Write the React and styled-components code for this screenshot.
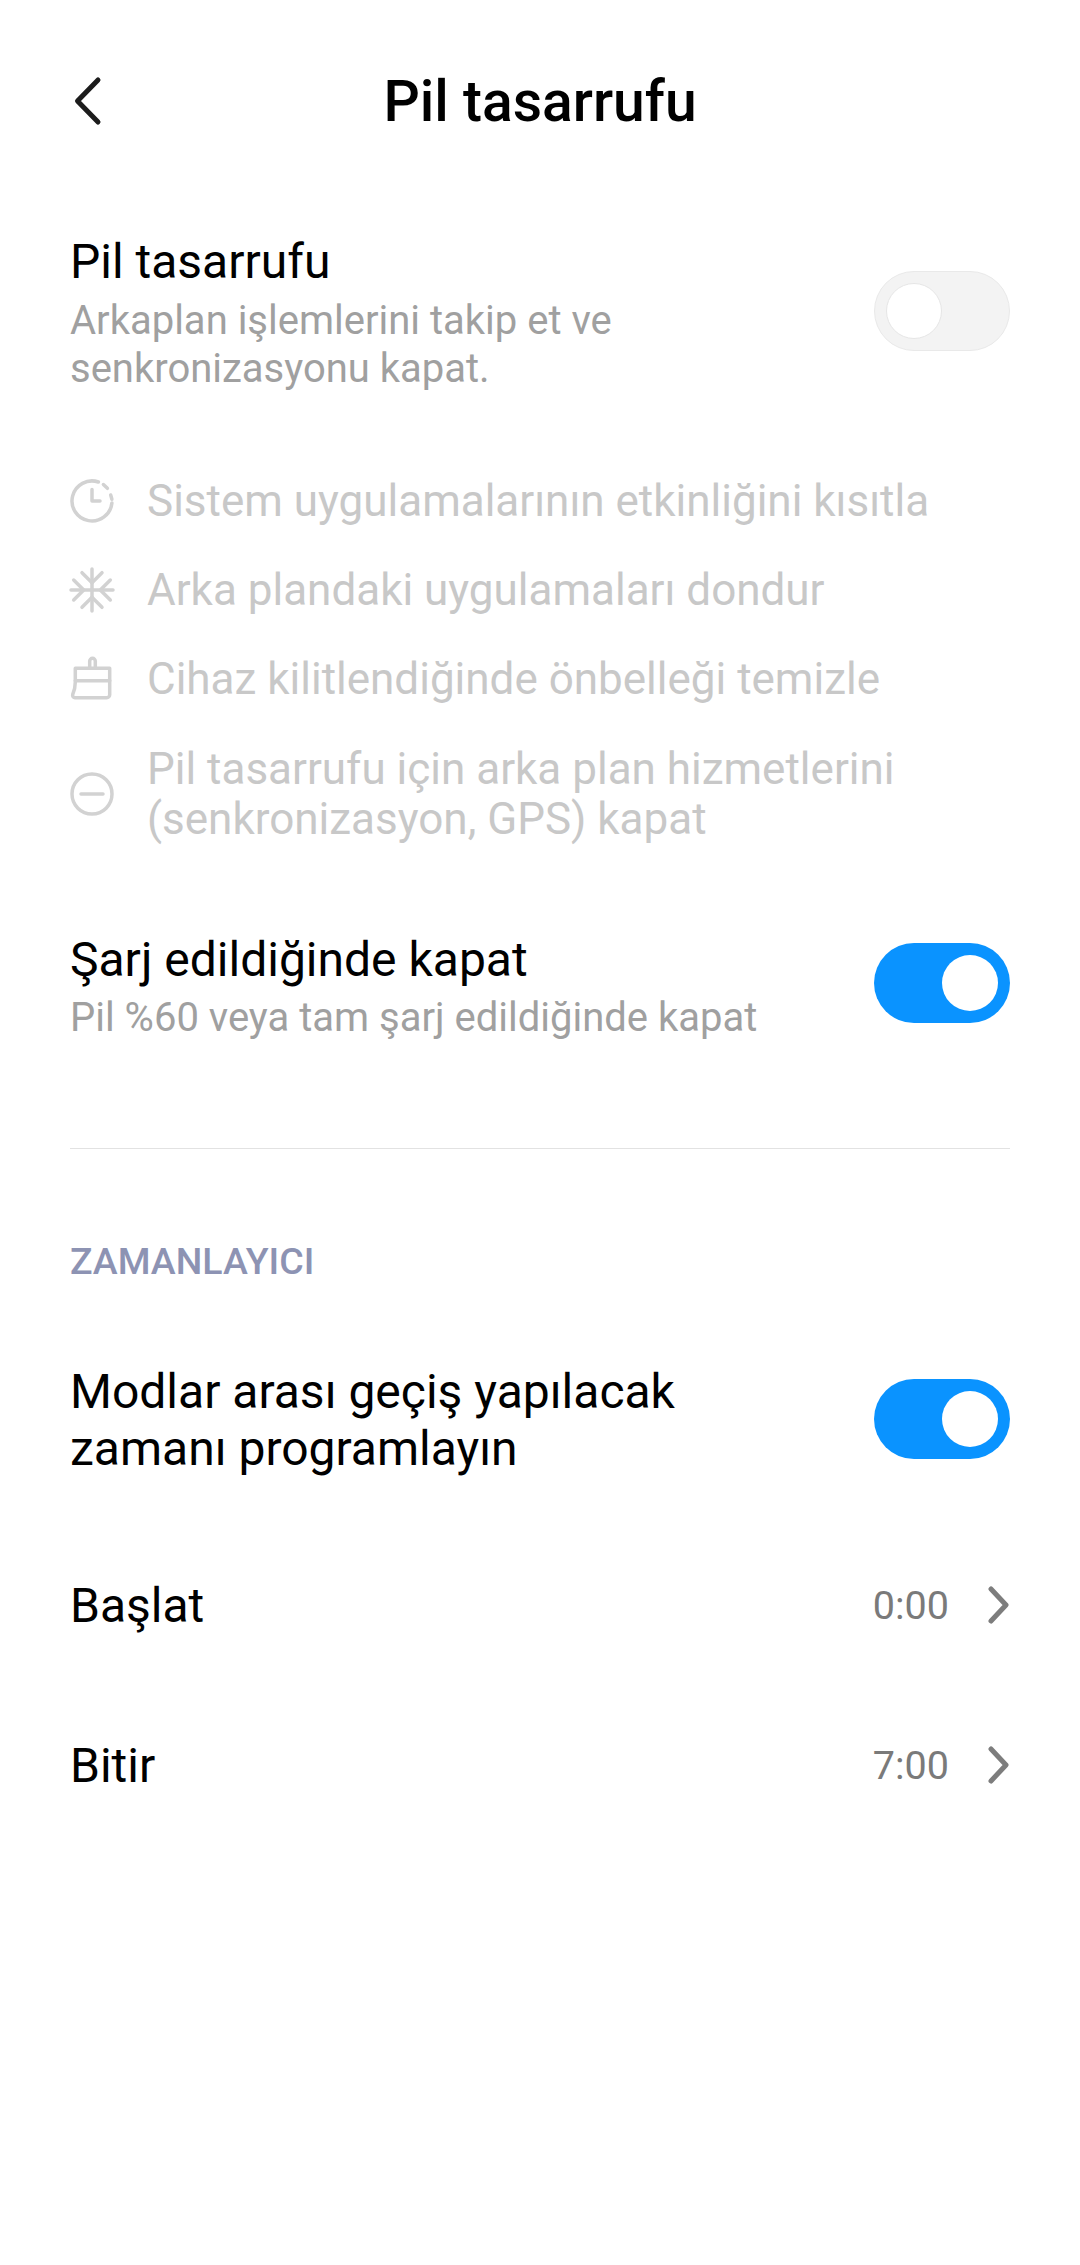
import React from 'react';
import styled, { createGlobalStyle } from 'styled-components';

const Global = createGlobalStyle`
  html, body { margin: 0; padding: 0; background: #fff; }
  body { font-family: Roboto, "Noto Sans", sans-serif; }
`;

const Page = styled.div`
  width: 1080px;
  height: 2265px;
  box-sizing: border-box;
  padding: 0 70px;
  background: #fff;
  overflow: hidden;
`;

const Header = styled.header`
  position: relative;
  height: 204px;
  display: flex;
  align-items: center;
  justify-content: center;
`;

const BackButton = styled.svg`
  position: absolute;
  left: 3px;
  top: 76px;
  width: 32px;
  height: 50px;
`;

const Title = styled.h1`
  margin: 0;
  font-size: 57px;
  font-weight: 500;
  color: #000;
  line-height: 64px;
`;

const SwitchRow = styled.section`
  display: flex;
  align-items: center;
  justify-content: space-between;
  margin-top: ${(p) => p.$top}px;
`;

const RowText = styled.div`
  width: ${(p) => p.$width}px;
`;

const RowTitle = styled.div`
  font-size: 48px;
  line-height: 57px;
  color: #000;
`;

const RowDesc = styled.div`
  font-size: 40px;
  line-height: 48px;
  color: #a0a0a0;
  margin-top: ${(p) => p.$top || 0}px;
`;

const Track = styled.div`
  flex: none;
  position: relative;
  box-sizing: border-box;
  width: 136px;
  height: 80px;
  border-radius: 40px;
  background: ${(p) => (p.$on ? '#0a93ff' : '#f3f3f3')};
  border: ${(p) => (p.$on ? 'none' : '1px solid #e9e9e9')};
  margin-top: ${(p) => p.$shift || 0}px;
`;

const Knob = styled.div`
  position: absolute;
  top: ${(p) => (p.$on ? 12 : 11)}px;
  ${(p) => (p.$on ? 'right: 12px;' : 'left: 11px;')}
  width: 56px;
  height: 56px;
  border-radius: 50%;
  background: #fff;
  box-sizing: border-box;
  border: ${(p) => (p.$on ? 'none' : '1px solid #e6e6e6')};
`;

const Features = styled.ul`
  list-style: none;
  margin: 63px 0 0;
  padding: 0;
  display: flex;
  flex-direction: column;
`;

const Feature = styled.li`
  display: flex;
  align-items: center;
  min-height: 89px;
  gap: 33px;
  margin-top: ${(p) => p.$top || 0}px;
`;

const FeatureIcon = styled.svg`
  flex: none;
  width: 44px;
  height: 44px;
  fill: none;
  stroke: #d2d2d2;
  stroke-width: 3.5;
  stroke-linecap: round;
  stroke-linejoin: round;
  overflow: visible;
`;

const FeatureLabel = styled.div`
  font-size: 44px;
  line-height: 50px;
  color: #c8c8c8;
`;

const Divider = styled.hr`
  border: none;
  height: 1px;
  background: #e2e2e2;
  margin: 106px 0 0;
`;

const SectionLabel = styled.div`
  margin-top: 92px;
  font-size: 37.5px;
  font-weight: 500;
  line-height: 40px;
  color: #8d93b3;
`;

const NavRow = styled.div`
  display: flex;
  align-items: center;
  justify-content: space-between;
  height: 160px;
  margin-top: ${(p) => p.$top || 0}px;
`;

const NavValue = styled.div`
  display: flex;
  align-items: center;
  gap: 37px;
  font-size: 39.5px;
  color: #7a7a7a;
`;

const Chevron = styled.svg`
  width: 24px;
  height: 38px;
  fill: none;
  stroke: #7d7d7d;
  stroke-width: 5;
  stroke-linecap: round;
  stroke-linejoin: round;
`;

const Toggle = ({ on, shift }) => (
  <Track $on={on} $shift={shift}>
    <Knob $on={on} />
  </Track>
);

const ClockIcon = () => (
  <FeatureIcon viewBox="0 0 44 44">
    <path d="M28.400 3A20 20 0 1 0 41.900 24" />
    <path d="M33.400 5.500L37.400 9.300M40.700 16L41.900 20.300" />
    <path d="M22 10.500V22H30" />
  </FeatureIcon>
);

const SnowIcon = () => (
  <FeatureIcon viewBox="0 0 44 44">
    <path d="M22 1V43M1 22H43" />
    <path d="M12 4.700L22 14.700L32 4.700M12 39.300L22 29.300L32 39.300M3.700 12L13.700 22L3.700 32M40.300 12L30.300 22L40.300 32" />
  </FeatureIcon>
);

const BrushIcon = () => (
  <FeatureIcon viewBox="0 0 44 44">
    <path d="M19.700 11.300V4.100A2.800 2.800 0 0 1 25.300 4.100V11.300" />
    <path d="M5.300 11.300H39.700V37.700A3 3 0 0 1 36.700 40.700H5A2.500 2.500 0 0 1 2.700 37.500C4.500 33.500 5.300 29 5.300 25Z" />
    <path d="M5.300 23.700H39.700" />
  </FeatureIcon>
);

const BlockIcon = () => (
  <FeatureIcon viewBox="0 0 44 44">
    <circle cx="22" cy="22" r="20" />
    <path d="M11 22H33" />
  </FeatureIcon>
);

const ChevronIcon = () => (
  <Chevron viewBox="0 0 24 38">
    <path d="M5 3L20 19L5 35" />
  </Chevron>
);

export default function App() {
  return (
    <Page>
      <Global />
      <Header>
        <BackButton viewBox="0 0 32 50" fill="none" stroke="#1c1c1c" strokeWidth="5" strokeLinecap="round" strokeLinejoin="round">
          <path d="M25 4L4.500 25L25 46" />
        </BackButton>
        <Title>Pil tasarrufu</Title>
      </Header>

      <SwitchRow $top={29}>
        <RowText $width={640}>
          <RowTitle>Pil tasarrufu</RowTitle>
          <RowDesc $top={7}>Arkaplan işlemlerini takip et ve senkronizasyonu kapat.</RowDesc>
        </RowText>
        <Toggle shift={-5} />
      </SwitchRow>

      <Features>
        <Feature><ClockIcon /><FeatureLabel>Sistem uygulamalarının etkinliğini kısıtla</FeatureLabel></Feature>
        <Feature><SnowIcon /><FeatureLabel>Arka plandaki uygulamaları dondur</FeatureLabel></Feature>
        <Feature><BrushIcon /><FeatureLabel>Cihaz kilitlendiğinde önbelleği temizle</FeatureLabel></Feature>
        <Feature $top={21}><BlockIcon /><FeatureLabel>Pil tasarrufu için arka plan hizmetlerini<br />(senkronizasyon, GPS) kapat</FeatureLabel></Feature>
      </Features>

      <SwitchRow $top={87}>
        <RowText $width={760}>
          <RowTitle>Şarj edildiğinde kapat</RowTitle>
          <RowDesc $top={6}>Pil %60 veya tam şarj edildiğinde kapat</RowDesc>
        </RowText>
        <Toggle on shift={-8} />
      </SwitchRow>

      <Divider />
      <SectionLabel>ZAMANLAYICI</SectionLabel>

      <SwitchRow $top={82}>
        <RowText $width={700}>
          <RowTitle>Modlar arası geçiş yapılacak zamanı programlayın</RowTitle>
        </RowText>
        <Toggle on shift={-3} />
      </SwitchRow>

      <NavRow $top={48}>
        <RowTitle>Başlat</RowTitle>
        <NavValue>0:00<ChevronIcon /></NavValue>
      </NavRow>
      <NavRow>
        <RowTitle>Bitir</RowTitle>
        <NavValue>7:00<ChevronIcon /></NavValue>
      </NavRow>
    </Page>
  );
}
